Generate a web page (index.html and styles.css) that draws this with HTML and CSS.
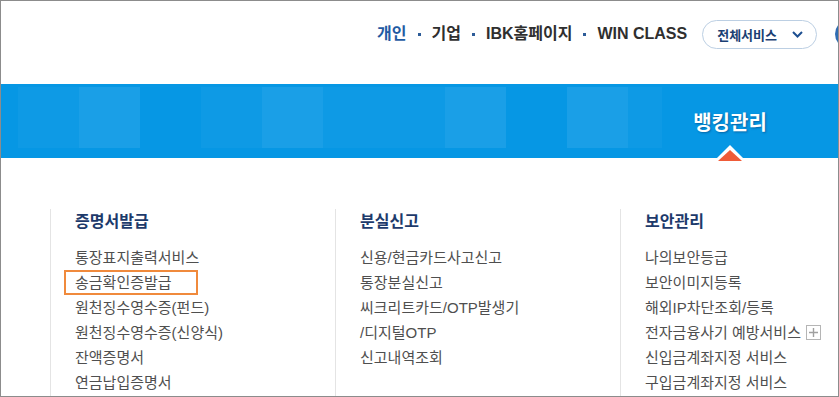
FILE: index.html
```html
<!DOCTYPE html>
<html lang="ko">
<head>
    <meta charset="UTF-8">
    <meta name="viewport" content="width=device-width, initial-scale=1.0">
    <title>IBK 뱅킹관리</title>
    <link rel="stylesheet" href="styles.css">
</head>
<body>
<div class="frame">

    <div class="top-bar">
        <a class="nav-link current" href="#">개인</a>
        <span class="dot"></span>
        <a class="nav-link" href="#">기업</a>
        <span class="dot"></span>
        <a class="nav-link" href="#">IBK홈페이지</a>
        <span class="dot"></span>
        <a class="nav-link" href="#">WIN CLASS</a>
        <button class="all-services">전체서비스
            <svg width="11" height="7" viewBox="0 0 11 7"><path d="M1 1 L5.5 5.5 L10 1" fill="none" stroke="#1d4f91" stroke-width="2"/></svg>
        </button>
        <span class="round-icon"></span>
    </div>

    <div class="gnb">
        <span class="tile faint"></span>
        <span class="tile light"></span>
        <span class="tile"></span>
        <span class="tile faint"></span>
        <span class="tile light"></span>
        <span class="tile faint"></span>
        <span class="tile faint"></span>
        <span class="tile light"></span>
        <span class="tile"></span>
        <span class="tile light"></span>
        <span class="tile faint short"></span>
        <div class="gnb-current">
            뱅킹관리
            <svg class="pointer" width="32" height="16" viewBox="0 0 32 16">
                <polygon points="0,16 16,0 32,16" fill="#ffffff"/>
                <polygon points="4,16 16,5 28,16" fill="#ef5b38"/>
            </svg>
        </div>
    </div>

    <div class="menu">
        <div class="menu-col">
            <h3>증명서발급</h3>
            <ul>
                <li>통장표지출력서비스</li>
                <li class="marked">송금확인증발급</li>
                <li>원천징수영수증(펀드)</li>
                <li>원천징수영수증(신양식)</li>
                <li>잔액증명서</li>
                <li>연금납입증명서</li>
            </ul>
        </div>
        <div class="menu-col">
            <h3>분실신고</h3>
            <ul>
                <li>신용/현금카드사고신고</li>
                <li>통장분실신고</li>
                <li>씨크리트카드/OTP발생기<br>/디지털OTP</li>
                <li>신고내역조회</li>
            </ul>
        </div>
        <div class="menu-col">
            <h3>보안관리</h3>
            <ul>
                <li>나의보안등급</li>
                <li>보안이미지등록</li>
                <li>해외IP차단조회/등록</li>
                <li>전자금융사기 예방서비스<svg class="plus" width="15" height="15" viewBox="0 0 15 15"><rect x="0.5" y="0.5" width="14" height="14" fill="#fff" stroke="#b5b5b5"/><path d="M7.5 3 V12 M3 7.5 H12" stroke="#a0a0a0" stroke-width="1.4"/></svg></li>
                <li>신입금계좌지정 서비스</li>
                <li>구입금계좌지정 서비스</li>
            </ul>
        </div>
    </div>

</div>
</body>
</html>
```

FILE: styles.css
```css
body {
    margin: 0;
    font-family: "Liberation Sans", "Noto Sans CJK KR", sans-serif;
    background: #fff;
}
.frame {
    width: 839px;
    height: 397px;
    box-sizing: border-box;
    border: 1px solid #8c8c8c;
    overflow: hidden;
}

/* top links */
.top-bar {
    height: 83px;
    box-sizing: border-box;
    padding-top: 19px;
    display: flex;
    justify-content: flex-end;
    align-items: flex-start;
}
.nav-link {
    font-size: 16px;
    font-weight: bold;
    line-height: 28px;
    color: #2f2f2f;
    text-decoration: none;
}
.nav-link.current {
    color: #1f5ba3;
}
.dot {
    width: 3px;
    height: 3px;
    margin: 13px 11px 0;
    background: #2d5c98;
}
.all-services {
    margin-left: 15px;
    height: 29px;
    padding: 0 13px 0 14px;
    display: flex;
    align-items: center;
    gap: 15px;
    border: 1px solid #bccfe3;
    border-radius: 15px;
    background: #fff;
    font-family: inherit;
    font-size: 13px;
    font-weight: bold;
    color: #1b3f73;
}
.round-icon {
    width: 28px;
    height: 28px;
    margin-left: 18px;
    margin-right: -25px;
    border-radius: 50%;
    background: #2f6cb3;
    flex-shrink: 0;
}

/* blue menu bar */
.gnb {
    height: 74px;
    background: #0697e4;
    display: flex;
    align-items: center;
    padding-left: 17px;
}
.tile {
    width: 61px;
    height: 61px;
    align-self: flex-start;
    margin-top: 3px;
    flex-shrink: 0;
}
.tile.faint {
    background: #0e9ae5;
}
.tile.light {
    background: #1a9fe7;
}
.tile.short {
    width: 34px;
}
.gnb-current {
    position: relative;
    width: 100px;
    margin-left: 18px;
    text-align: center;
    font-size: 20px;
    font-weight: bold;
    color: #fff;
    text-shadow: 1px 1px 2px rgba(0, 40, 90, 0.45);
}
.pointer {
    position: absolute;
    left: 34px;
    top: 38px;
}

/* sub menu */
.menu {
    display: flex;
    padding: 51px 0 0 49px;
}
.menu-col {
    width: 285px;
    height: 200px;
    flex-shrink: 0;
    box-sizing: border-box;
    border-left: 1px solid #e4e4e4;
    padding-left: 24px;
}
.menu-col h3 {
    margin: 0 0 10px;
    font-size: 16px;
    line-height: 26px;
    color: #1d3a6b;
}
.menu-col ul {
    margin: 0;
    padding: 0;
    list-style: none;
}
.menu-col li {
    font-size: 15px;
    line-height: 25px;
    color: #4f4f4f;
}
.menu-col li.marked {
    width: 134px;
    box-sizing: border-box;
    margin-left: -11px;
    padding-left: 9px;
    border: 2px solid #f08a3c;
    line-height: 21px;
}
.plus {
    margin-left: 5px;
    vertical-align: -2px;
}
```
